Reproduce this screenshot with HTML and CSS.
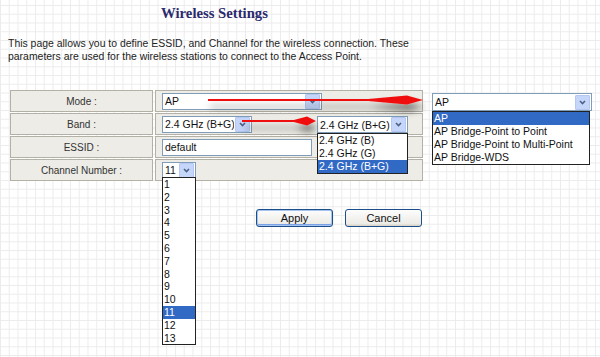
FILE: index.html
```html
<!DOCTYPE html>
<html lang="en">
<head>
    <meta charset="UTF-8">
    <title>Wireless Settings</title>
    <link rel="stylesheet" href="styles.css">
</head>
<body>
    <div class="page">
        <h1 class="title">Wireless Settings</h1>
        <p class="intro">This page allows you to define ESSID, and Channel for the wireless connection. These<br>parameters are used for the wireless stations to connect to the Access Point.</p>

        <div class="form-table">
            <div class="cell label">Mode :</div>
            <div class="cell field">
                <div class="select mode-select"><span class="select-text">AP</span><span class="drop-btn"></span></div>
            </div>

            <div class="cell label">Band :</div>
            <div class="cell field">
                <div class="select band-select"><span class="select-text">2.4 GHz (B+G)</span><span class="drop-btn"></span></div>
            </div>

            <div class="cell label">ESSID :</div>
            <div class="cell field">
                <div class="text-input">default</div>
            </div>

            <div class="cell label">Channel Number :</div>
            <div class="cell field">
                <div class="select channel-select"><span class="select-text">11</span><span class="drop-btn"></span></div>
            </div>
        </div>

        <div class="buttons">
            <button class="btn btn-default">Apply</button>
            <button class="btn">Cancel</button>
        </div>

        <!-- opened dropdown: channel -->
        <ul class="option-list channel-list">
            <li>1</li><li>2</li><li>3</li><li>4</li><li>5</li><li>6</li><li>7</li>
            <li>8</li><li>9</li><li>10</li><li class="selected">11</li><li>12</li><li>13</li>
        </ul>

        <!-- opened dropdown: band -->
        <div class="popup band-popup">
            <div class="select"><span class="select-text">2.4 GHz (B+G)</span><span class="drop-btn"></span></div>
            <ul class="option-list">
                <li>2.4 GHz (B)</li>
                <li>2.4 GHz (G)</li>
                <li class="selected">2.4 GHz (B+G)</li>
            </ul>
        </div>

        <!-- opened dropdown: mode -->
        <div class="popup mode-popup">
            <div class="select"><span class="select-text">AP</span><span class="drop-btn"></span></div>
            <ul class="option-list">
                <li class="selected">AP</li>
                <li>AP Bridge-Point to Point</li>
                <li>AP Bridge-Point to Multi-Point</li>
                <li>AP Bridge-WDS</li>
            </ul>
        </div>

        <svg class="arrows" width="600" height="357" viewBox="0 0 600 357">
            <defs>
                <filter id="shadow" x="-10%" y="-200%" width="120%" height="600%">
                    <feDropShadow dx="2" dy="7" stdDeviation="3.5" flood-color="#000" flood-opacity="0.5"/>
                </filter>
            </defs>
            <g fill="#f01010" stroke="none" filter="url(#shadow)">
                <rect x="208" y="99" width="160" height="2"/>
                <polygon points="357,100 407,95.5 423,100 407,104.5"/>
                <rect x="242" y="120" width="58" height="2"/>
                <polygon points="290,121 307,116.5 316,121 307,125.5"/>
            </g>
        </svg>
    </div>
</body>
</html>
```

FILE: styles.css
```css
body {
    margin: 0;
    font-family: "Liberation Sans", Arial, sans-serif;
    color: #222;
    background-color: #fff;
    background-image:
        linear-gradient(#ececec 1px, transparent 1px),
        linear-gradient(90deg, #ececec 1px, transparent 1px);
    background-size: 8.75px 8.75px;
    background-position: 0 5px;
}

.page {
    position: relative;
    width: 600px;
    height: 357px;
    overflow: hidden;
}

.title {
    width: 413px;
    margin: 0;
    padding: 4px 0 0 8px;
    text-align: center;
    font-family: "Liberation Serif", "Times New Roman", serif;
    font-size: 14.7px;
    font-weight: bold;
    color: #2a2a6c;
    line-height: 18px;
}

.intro {
    margin: 15px 0 0 8px;
    font-size: 10.45px;
    line-height: 13px;
}

/* settings table */
.form-table {
    display: grid;
    grid-template-columns: 143px 268px;
    gap: 1px 2px;
    width: max-content;
    margin: 27px 0 0 10px;
}

.cell {
    height: 20px;
    background: #edece6;
    border: 1px solid #b3b0a5;
    display: flex;
    align-items: center;
}

.label {
    justify-content: center;
    font-size: 10px;
    color: #333;
}

.field {
    padding-left: 6px;
}

.select {
    box-sizing: border-box;
    height: 17px;
    border: 1px solid #7f9db9;
    background: #fff;
    display: flex;
    align-items: center;
    font-size: 10.5px;
    color: #111;
}

.select-text {
    flex: 1;
    padding-left: 2px;
    white-space: nowrap;
    overflow: hidden;
}

.drop-btn {
    flex: none;
    width: 13px;
    height: 13px;
    margin: 1px;
    background: #c6d6fb url("data:image/svg+xml;utf8,<svg xmlns='http://www.w3.org/2000/svg' width='13' height='13'><path d='M4 5 L6.5 7.5 L9 5' fill='none' stroke='%234d6185' stroke-width='1.6'/></svg>") center no-repeat;
    border: 1px solid #b4c8f3;
    border-radius: 1px;
}

.mode-select {
    width: 160px;
}

.band-select {
    width: 90px;
}

.channel-select {
    width: 34px;
}

.text-input {
    box-sizing: border-box;
    width: 150px;
    height: 17px;
    border: 1px solid #7f9db9;
    background: #fff;
    font-size: 10.5px;
    line-height: 15px;
    padding-left: 2px;
    color: #111;
}

/* buttons */
.buttons {
    display: flex;
    gap: 12px;
    margin: 28px 0 0 256px;
}

.btn {
    width: 77px;
    height: 18px;
    padding: 0;
    border: 1px solid #1c4f8a;
    border-radius: 3px;
    background: linear-gradient(#fdfdfd, #ecebe6 85%, #d6d0c5);
    font-family: "Liberation Sans", Arial, sans-serif;
    font-size: 11px;
    color: #111;
}

.btn-default {
    box-shadow: inset 0 0 0 1px #a7c4f1, inset 0 -1px 0 1px #7ba2e7;
}

/* opened dropdowns */
.option-list {
    margin: 0;
    padding: 0;
    list-style: none;
    background: #fff;
    border: 1px solid #222;
    font-size: 10.5px;
    color: #111;
}

.option-list li {
    height: 13px;
    line-height: 13px;
    padding-left: 1px;
    white-space: nowrap;
}

.option-list li.selected {
    background: #316ac5;
    color: #fff;
}

.channel-list {
    position: absolute;
    left: 162px;
    top: 177px;
    width: 32px;
}

.channel-list li {
    height: 12.8px;
    line-height: 12.8px;
}

.popup {
    position: absolute;
}

.band-popup {
    left: 317px;
    top: 116px;
    width: 91px;
}

.mode-popup {
    left: 432px;
    top: 93px;
    width: 160px;
}

.mode-popup .select {
    height: 18px;
}

.mode-popup .option-list {
    width: 156px;
}

.arrows {
    position: absolute;
    left: 0;
    top: 0;
    pointer-events: none;
}
```
